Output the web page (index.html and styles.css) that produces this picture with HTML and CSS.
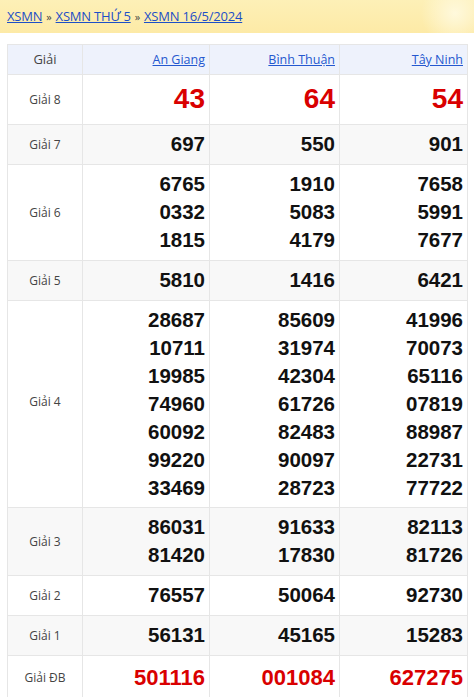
FILE: index.html
```html
<!DOCTYPE html>
<html lang="vi">
<head>
<meta charset="utf-8">
<title>XSMN 16/5/2024</title>
<link rel="stylesheet" href="styles.css">
</head>
<body>
<nav class="crumbs">
  <a href="#">XSMN</a><span class="sep">»</span><a href="#">XSMN THỨ 5</a><span class="sep">»</span><a href="#">XSMN 16/5/2024</a>
</nav>
<table class="kq">
  <colgroup><col class="c0"><col class="c1"><col class="c2"><col class="c3"></colgroup>
  <thead>
    <tr><th class="lbl">Giải</th><th><a href="#">An Giang</a></th><th><a href="#">Bình Thuận</a></th><th><a href="#">Tây Ninh</a></th></tr>
  </thead>
  <tbody>
    <tr class="g8"><td class="lbl">Giải 8</td><td>43</td><td>64</td><td>54</td></tr>
    <tr class="alt"><td class="lbl">Giải 7</td><td>697</td><td>550</td><td>901</td></tr>
    <tr><td class="lbl">Giải 6</td><td>6765<br>0332<br>1815</td><td>1910<br>5083<br>4179</td><td>7658<br>5991<br>7677</td></tr>
    <tr class="alt"><td class="lbl">Giải 5</td><td>5810</td><td>1416</td><td>6421</td></tr>
    <tr class="g4"><td class="lbl">Giải 4</td><td>28687<br>10711<br>19985<br>74960<br>60092<br>99220<br>33469</td><td>85609<br>31974<br>42304<br>61726<br>82483<br>90097<br>28723</td><td>41996<br>70073<br>65116<br>07819<br>88987<br>22731<br>77722</td></tr>
    <tr class="alt"><td class="lbl">Giải 3</td><td>86031<br>81420</td><td>91633<br>17830</td><td>82113<br>81726</td></tr>
    <tr><td class="lbl">Giải 2</td><td>76557</td><td>50064</td><td>92730</td></tr>
    <tr class="alt"><td class="lbl">Giải 1</td><td>56131</td><td>45165</td><td>15283</td></tr>
    <tr class="db"><td class="lbl">Giải ĐB</td><td>501116</td><td>001084</td><td>627275</td></tr>
  </tbody>
</table>
</body>
</html>
```
FILE: styles.css
```css
html, body { margin: 0; padding: 0; background: #fff; }
body { font-family: "Open Sans", "Noto Sans", sans-serif; }

.crumbs {
  height: 33px;
  box-sizing: border-box;
  padding: 5px 7px 0;
  font-size: 13px;
  line-height: 22px;
  letter-spacing: -0.2px;
  background:
    radial-gradient(circle at 96% 40%, rgba(255,250,225,0.9) 0, rgba(255,248,220,0) 34px),
    linear-gradient(#fdf0b7, #fdeaa6);
  color: #333;
}
.crumbs a { color: #1d4fc7; text-decoration: underline; }
.crumbs .sep { margin: 0 4px; font-size: 11px; color: #444; }

.kq {
  margin: 11px 0 0 7px;
  border-collapse: collapse;
  table-layout: fixed;
  width: 460px;
}
.kq .c0 { width: 75px; }
.kq .c1 { width: 127px; }
.kq .c2 { width: 130px; }
.kq .c3 { width: 128px; }

.kq th, .kq td {
  border: 1px solid #e6e6e6;
  text-align: right;
  padding: 5px 4px 5px 0;
}
.kq th {
  background: #eef2fc;
  font-weight: normal;
  font-size: 12.5px;
  line-height: 19px;
  height: 19px;
  padding-top: 5px;
  padding-bottom: 5px;
}
.kq th a { color: #2458cf; text-decoration: underline; }

.kq td {
  font-family: "Liberation Sans", Arial, sans-serif;
  font-weight: bold;
  font-size: 20.5px;
  line-height: 28px;
  color: #111;
  padding-top: 5px;
  padding-bottom: 6px;
}
.kq .g4 td { padding-bottom: 5px; }
.kq .lbl {
  text-align: center;
  padding: 0;
  font-family: "Open Sans", "Noto Sans", sans-serif;
  font-weight: normal;
  font-size: 12px;
  color: #444;
}
.kq th.lbl { font-size: 13px; color: #444; }

.kq .alt td { background: #f8f8f8; }

.kq .g8 td:not(.lbl) {
  color: #d90000;
  font-size: 28px;
  line-height: 38px;
}
.kq .db td:not(.lbl) {
  color: #d90000;
  font-size: 22px;
  line-height: 34px;
}
.kq .db td { padding-top: 5px; padding-bottom: 6px; }
```
